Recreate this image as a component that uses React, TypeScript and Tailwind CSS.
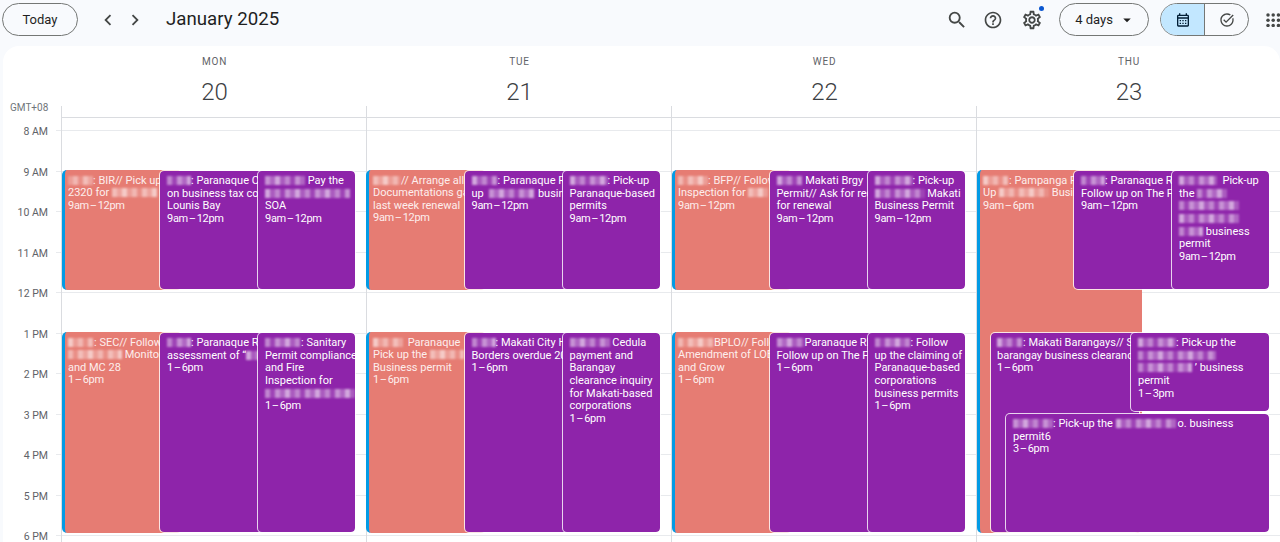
import React from "react"
import {
  MdArrowDropDown,
  MdChevronLeft,
  MdChevronRight,
  MdOutlineCalendarMonth,
  MdOutlineHelpOutline,
  MdOutlineSettings,
  MdOutlineTaskAlt,
  MdSearch,
} from "react-icons/md"

const HOUR_HEIGHT = 40.5
const GRID_TOP = 12

// number = width of a redacted (pixelated) run of text
type Line = (string | number)[]

interface CalendarEvent {
  left: number
  width: number
  start: number
  end: number
  color: "salmon" | "purple"
  lines: Line[]
  textLeft?: number
}

const days: { name: string; date: number; events: CalendarEvent[] }[] = [
  {
    name: "MON",
    date: 20,
    events: [
      { left: 0, width: 120, start: 9, end: 12, color: "salmon", lines: [[25, ": BIR// Pick up"], ["2320 for ", 46, " l"], ["9am – 12pm"]] },
      { left: 97, width: 120, start: 9, end: 12, color: "purple", lines: [[24, ": Paranaque City"], ["on business tax compliance"], ["Lounis Bay"], ["9am – 12pm"]] },
      { left: 195, width: 99, start: 9, end: 12, color: "purple", lines: [[40, " Pay the"], [86], ["SOA"], ["9am – 12pm"]] },
      { left: 0, width: 120, start: 13, end: 18, color: "salmon", lines: [[26, ": SEC// Follow"], [54, " Monitor"], ["and MC 28"], ["1 – 6pm"]] },
      { left: 97, width: 120, start: 13, end: 18, color: "purple", lines: [[24, ": Paranaque RDO"], ["assessment of “", 20], ["1 – 6pm"]] },
      { left: 195, width: 99, start: 13, end: 18, color: "purple", lines: [[36, ": Sanitary"], ["Permit compliance"], ["and Fire"], ["Inspection for"], [90], ["1 – 6pm"]] },
    ],
  },
  {
    name: "TUE",
    date: 21,
    events: [
      { left: -1, width: 120, start: 9, end: 12, color: "salmon", textLeft: 4, lines: [[28, "// Arrange all"], ["Documentations gathered"], ["last week renewal"], ["9am – 12pm"]] },
      { left: 96.5, width: 120, start: 9, end: 12, color: "purple", lines: [[26, ": Paranaque RDO"], ["up  ", 46, " business"], ["9am – 12pm"]] },
      { left: 194.5, width: 99, start: 9, end: 12, color: "purple", lines: [[38, ": Pick-up"], ["Paranaque-based"], ["permits"], ["9am – 12pm"]] },
      { left: -1, width: 120, start: 13, end: 18, color: "salmon", textLeft: 4, lines: [[32, " Paranaque"], ["Pick up the ", 34], ["Business permit"], ["1 – 6pm"]] },
      { left: 96.5, width: 120, start: 13, end: 18, color: "purple", lines: [[24, ": Makati City Hall"], ["Borders overdue 2024"], ["1 – 6pm"]] },
      { left: 194.5, width: 99, start: 13, end: 18, color: "purple", lines: [[40, " Cedula"], ["payment and"], ["Barangay"], ["clearance inquiry"], ["for Makati-based"], ["corporations"], ["1 – 6pm"]] },
    ],
  },
  {
    name: "WED",
    date: 22,
    events: [
      { left: 0, width: 120, start: 9, end: 12, color: "salmon", lines: [[30, ": BFP// Follow"], ["Inspection for ", 22], ["9am – 12pm"]] },
      { left: 96.5, width: 120, start: 9, end: 12, color: "purple", lines: [[26, " Makati Brgy"], ["Permit// Ask for req"], ["for renewal"], ["9am – 12pm"]] },
      { left: 194.5, width: 99, start: 9, end: 12, color: "purple", lines: [[38, ": Pick-up"], [50, " Makati"], ["Business Permit"], ["9am – 12pm"]] },
      { left: 0, width: 120, start: 13, end: 18, color: "salmon", lines: [[36, "BPLO// Follow"], ["Amendment of LOE"], ["and Grow"], ["1 – 6pm"]] },
      { left: 96.5, width: 120, start: 13, end: 18, color: "purple", lines: [[28, "Paranaque RDO"], ["Follow up on The Fern"], ["1 – 6pm"]] },
      { left: 194.5, width: 99, start: 13, end: 18, color: "purple", lines: [[36, ": Follow"], ["up the claiming of"], ["Paranaque-based"], ["corporations"], ["business permits"], ["1 – 6pm"]] },
    ],
  },
  {
    name: "THU",
    date: 23,
    events: [
      { left: 0, width: 165, start: 9, end: 18, color: "salmon", lines: [[26, ": Pampanga Pick"], ["Up ", 50, " Business"], ["9am – 6pm"]] },
      { left: 96, width: 120, start: 9, end: 12, color: "purple", lines: [[24, ": Paranaque RDO"], ["Follow up on The Fern"], ["9am – 12pm"]] },
      { left: 194, width: 99, start: 9, end: 12, color: "purple", lines: [[38, "  Pick-up"], ["the ", 30], [60], [62], [24, " business"], ["permit"], ["9am – 12pm"]] },
      { left: 13, width: 150, start: 13, end: 18, color: "purple", textLeft: 6, lines: [[26, ": Makati Barangays// Submit"], ["barangay business clearance"], ["1 – 6pm"]] },
      { left: 153, width: 140, start: 13, end: 15, color: "purple", lines: [[38, ": Pick-up the"], [78], [54, " ’ business"], ["permit"], ["1 – 3pm"]] },
      { left: 28, width: 265, start: 15, end: 18, color: "purple", lines: [[40, ": Pick-up the ", 62, "o. business"], ["permit6"], ["3 – 6pm"]] },
    ],
  },
]

const hours = ["8 AM", "9 AM", "10 AM", "11 AM", "12 PM", "1 PM", "2 PM", "3 PM", "4 PM", "5 PM", "6 PM"]

const shades = ["bg-white/45", "bg-white/25", "bg-white/60", "bg-white/30", "bg-white/50", "bg-white/15"]

const Redacted = ({ width }: { width: number }) => {
  const blocks = Math.max(1, Math.round(width / 5))
  return (
    <span className="inline-flex h-[9px] overflow-hidden align-[-1px] blur-[1px]" style={{ width }}>
      {Array.from({ length: blocks }).map((_, i) => (
        <span key={i} className={`h-full w-[5px] shrink-0 ${shades[(i * 5 + width) % shades.length]}`} />
      ))}
    </span>
  )
}

const isTimeLine = (line: Line) => typeof line[0] === "string" && /^\d+(am|pm)? – /.test(line[0])

const EventCard = ({ event }: { event: CalendarEvent }) => {
  const isSalmon = event.color === "salmon"
  const outset = isSalmon ? 0 : 1
  return (
    <div
      className={
        isSalmon
          ? "absolute overflow-hidden rounded-[5px] border-l-[3px] border-[#039be5] bg-[#e67c73] pl-[3px] pr-1 pt-[4.5px] text-[#fdeeed]"
          : "absolute overflow-hidden rounded-[5px] border border-white/80 bg-[#8e24aa] bg-clip-padding pl-[7px] pr-1 pt-[4.5px] text-white"
      }
      style={{
        left: event.left,
        width: event.width,
        top: GRID_TOP + (event.start - 8) * HOUR_HEIGHT - 0.5 * outset - 0.5,
        height: (event.end - event.start) * HOUR_HEIGHT - 2 + outset,
        paddingLeft: event.textLeft,
      }}
    >
      {event.lines.map((line, i) => (
        <div
          key={i}
          className={
            isTimeLine(line)
              ? "h-[12.67px] whitespace-nowrap text-[11px] leading-[12.67px] tracking-[-0.3px] [word-spacing:-1.5px]"
              : "h-[12.67px] whitespace-nowrap text-[11px] leading-[12.67px]"
          }
        >
          {line.map((part, j) =>
            typeof part === "number" ? <Redacted key={j} width={part} /> : <span key={j} className="whitespace-pre">{part}</span>
          )}
        </div>
      ))}
    </div>
  )
}

const AppsIcon = () => (
  <svg width="14" height="14" viewBox="0 0 14 14" fill="#444746" className="ml-[17px]">
    {[2, 7.2, 12.4].flatMap(y =>
      [2, 7.2, 12.4].map(x => <circle key={`${x}-${y}`} cx={x} cy={y} r="1.75" />)
    )}
  </svg>
)

const App: React.FC = () => {
  return (
    <div className="h-[542px] w-[1280px] overflow-hidden bg-[#f8fafd] font-['Roboto',sans-serif] text-[#444746]">
      <header className="flex h-[46px] items-start pt-[3px]">
        <button className="ml-[2px] h-[33px] w-[76px] rounded-full border border-[#747775] text-[13px] font-normal text-[#1f1f1f]">
          Today
        </button>
        <div className="ml-[19px] flex h-[33px] items-center gap-[5px] text-[#444746]">
          <MdChevronLeft size={22} />
          <MdChevronRight size={22} />
        </div>
        <h1 className="ml-[20px] flex h-[33px] items-center text-[18.7px] font-normal text-[#1f1f1f]">January 2025</h1>

        <div className="ml-auto flex h-[33px] items-center">
          <MdSearch size={22} className="text-[#444746]" />
          <MdOutlineHelpOutline size={20} className="ml-[15px]" />
          <div className="relative ml-[18px]">
            <MdOutlineSettings size={22} />
            <span className="absolute right-[-1px] top-[-3px] h-[5px] w-[5px] rounded-full bg-[#0b57d0]" />
          </div>
          <button className="ml-[16px] flex h-[33px] w-[90px] items-center justify-center rounded-full border border-[#747775] pl-[3px] text-[13px] font-normal text-[#1f1f1f]">
            4 days
            <MdArrowDropDown size={18} className="ml-[5px]" />
          </button>
          <div className="ml-[11px] flex h-[33px] w-[89px] overflow-hidden rounded-full border border-[#747775]">
            <div className="flex w-[44px] items-center justify-center border-r border-[#747775] bg-[#c2e7ff] text-[#001d35]">
              <MdOutlineCalendarMonth size={16} />
            </div>
            <div className="flex flex-1 items-center justify-center">
              <MdOutlineTaskAlt size={16} />
            </div>
          </div>
          <AppsIcon />
        </div>
      </header>

      <main className="ml-[3px] h-[496px] overflow-hidden rounded-t-2xl bg-white">
        <div className="flex h-[72px]">
          <div className="flex w-[58px] shrink-0 items-end pb-[3px] pl-[7px] text-[10px] text-[#70757a]">GMT+08</div>
          {days.map((day, i) => (
            <div
              key={day.name}
              className={
                i === 3
                  ? "flex flex-1 flex-col items-center border-b border-[#dadce0] pt-[10px]"
                  : "flex w-[305px] flex-col items-center border-b border-[#dadce0] pt-[10px]"
              }
            >
              <div className="pl-[2px] text-[10px] leading-[11px] tracking-[0.8px] text-[#5f6368]">{day.name}</div>
              <div className="mt-[11px] pl-[2px] text-[24px] font-light leading-[28px] text-[#3c4043]">{day.date}</div>
              <div className="mt-auto h-[17px] w-px self-start bg-[#dadce0]" />
            </div>
          ))}
        </div>

        <div className="flex">
          <div className="w-[58px] shrink-0 pt-[12px]">
            {hours.map(hour => (
              <div key={hour} className="flex h-[40.5px] items-start justify-end">
                <span className="mr-[8px] mt-[2px] -translate-y-1/2 text-[10.5px] leading-none text-[#5f6368]">{hour}</span>
                <span className="w-[5px] border-t border-[#e8eaed]" />
              </div>
            ))}
          </div>
          {days.map((day, i) => (
            <div
              key={day.name}
              className={
                i === 3
                  ? "relative h-[424px] flex-1 border-l border-[#dadce0] pt-[12px]"
                  : "relative h-[424px] w-[305px] border-l border-[#dadce0] pt-[12px]"
              }
            >
              {hours.map(hour => (
                <div key={hour} className="h-[40.5px] border-t border-[#e8eaed]" />
              ))}
              {day.events.map((event, j) => (
                <EventCard key={j} event={event} />
              ))}
            </div>
          ))}
        </div>
      </main>
    </div>
  )
}

export default App
